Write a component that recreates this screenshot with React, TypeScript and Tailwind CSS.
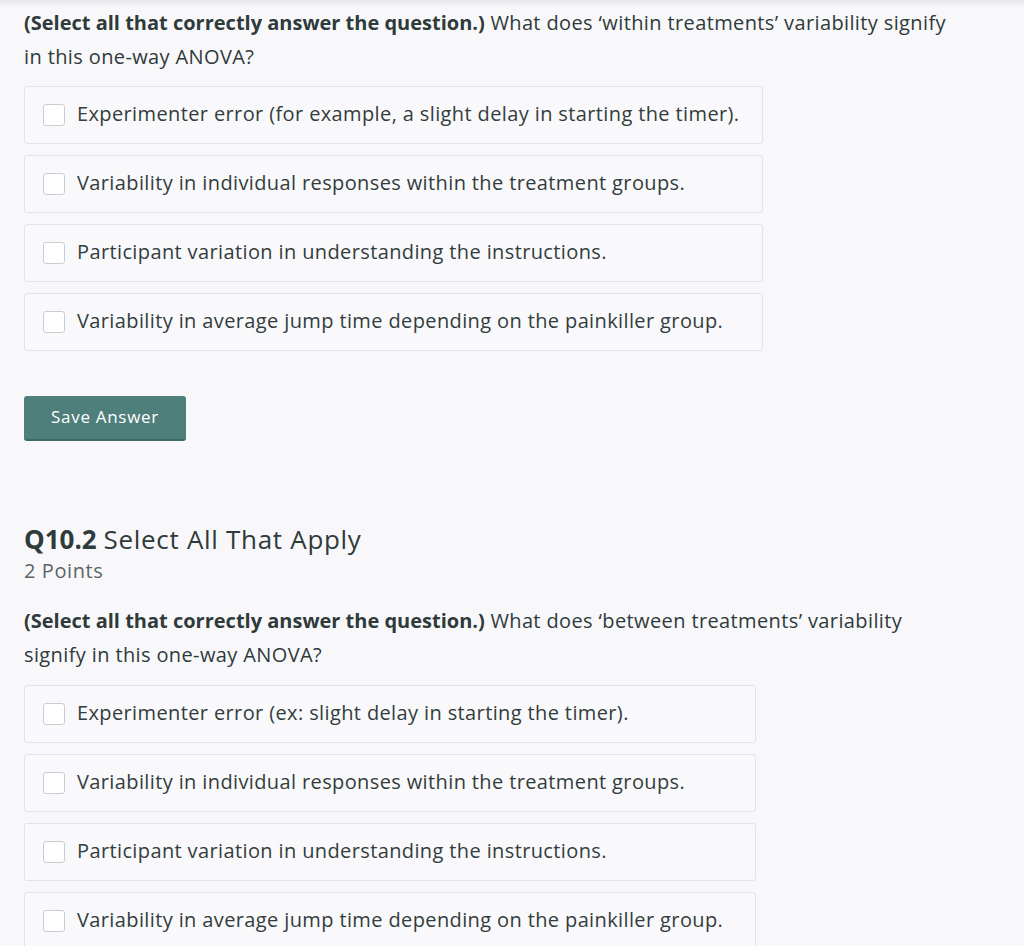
import { useState } from "react";

const q1 = [
  "Experimenter error (for example, a slight delay in starting the timer).",
  "Variability in individual responses within the treatment groups.",
  "Participant variation in understanding the instructions.",
  "Variability in average jump time depending on the painkiller group.",
];

const q2 = [
  "Experimenter error (ex: slight delay in starting the timer).",
  "Variability in individual responses within the treatment groups.",
  "Participant variation in understanding the instructions.",
  "Variability in average jump time depending on the painkiller group.",
];

function Option({ label }: { label: string }) {
  const [checked, setChecked] = useState(false);
  return (
    <label className="flex h-[58px] cursor-pointer items-center gap-[12px] rounded-[3px] border border-[#e1e3ea] bg-[#f9f9fb] pl-[18px]">
      <span
        onClick={() => setChecked(!checked)}
        className={
          "h-[22px] w-[22px] shrink-0 rounded-[3px] border border-[#c9cdd3] " +
          (checked ? "bg-[#4e7f7a]" : "bg-white")
        }
      />
      <span className="pb-[3px] text-[20px] tracking-[0.38px] text-[#333d3d]">{label}</span>
    </label>
  );
}

export default function App() {
  return (
    <div
      className="relative min-h-[946px] bg-[#f8f8fa] px-[24px] text-[#2f3a3a]"
      style={{ fontFamily: "'Open Sans', Lato, sans-serif" }}
    >
      <div className="pointer-events-none absolute inset-x-0 top-0 h-[8px] bg-gradient-to-b from-[#e6e6ea] to-transparent" />

      <p className="max-w-[945px] pt-[6px] text-[20px] leading-[34px] tracking-[0.38px]">
        <b className="font-bold tracking-normal">(Select all that correctly answer the question.)</b> What
        does ‘within treatments’ variability signify in this one-way ANOVA?
      </p>

      <div className="mt-[12px] flex w-[739px] flex-col gap-[11px]">
        {q1.map((o) => (
          <Option key={o} label={o} />
        ))}
      </div>

      <button className="mt-[45px] h-[45px] w-[162px] rounded-[3px] border-b-2 border-[#3f6a66] bg-[#4e7f7a] pb-[2px] text-[17px] tracking-[0.7px] text-white">
        Save Answer
      </button>

      <h2 className="mt-[81px] text-[26px] leading-[34px]">
        <b className="font-bold">Q10.2</b> <span className="tracking-[0.7px]">Select All That Apply</span>
      </h2>
      <div className="text-[20px] leading-[30px] tracking-[0.6px] text-[#5b6566]">2 Points</div>

      <p className="mt-[18px] max-w-[945px] text-[20px] leading-[34px] tracking-[0.38px]">
        <b className="font-bold tracking-normal">(Select all that correctly answer the question.)</b> What
        does ‘between treatments’ variability signify in this one-way ANOVA?
      </p>

      <div className="mt-[13px] flex w-[732px] flex-col gap-[11px] pb-[10px]">
        {q2.map((o) => (
          <Option key={o} label={o} />
        ))}
      </div>
    </div>
  );
}
